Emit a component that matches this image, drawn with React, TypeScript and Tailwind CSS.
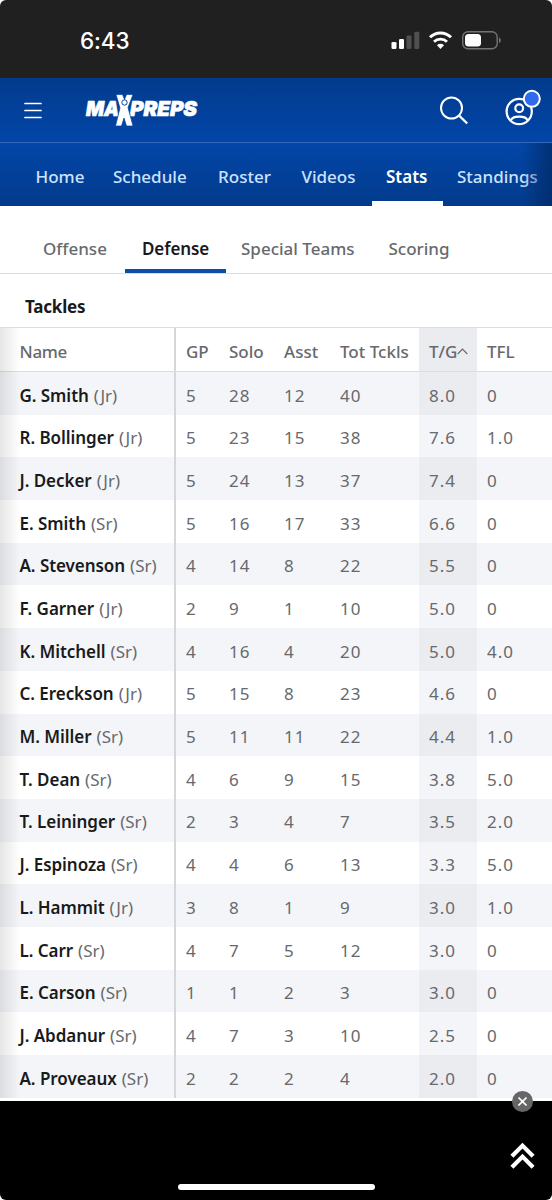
import clsx from 'clsx'

type PlayerRow = {
  name: string
  year: 'Jr' | 'Sr'
  stats: string[]
}

const players: PlayerRow[] = [
  { name: 'G. Smith', year: 'Jr', stats: ['5', '28', '12', '40', '8.0', '0'] },
  { name: 'R. Bollinger', year: 'Jr', stats: ['5', '23', '15', '38', '7.6', '1.0'] },
  { name: 'J. Decker', year: 'Jr', stats: ['5', '24', '13', '37', '7.4', '0'] },
  { name: 'E. Smith', year: 'Sr', stats: ['5', '16', '17', '33', '6.6', '0'] },
  { name: 'A. Stevenson', year: 'Sr', stats: ['4', '14', '8', '22', '5.5', '0'] },
  { name: 'F. Garner', year: 'Jr', stats: ['2', '9', '1', '10', '5.0', '0'] },
  { name: 'K. Mitchell', year: 'Sr', stats: ['4', '16', '4', '20', '5.0', '4.0'] },
  { name: 'C. Ereckson', year: 'Jr', stats: ['5', '15', '8', '23', '4.6', '0'] },
  { name: 'M. Miller', year: 'Sr', stats: ['5', '11', '11', '22', '4.4', '1.0'] },
  { name: 'T. Dean', year: 'Sr', stats: ['4', '6', '9', '15', '3.8', '5.0'] },
  { name: 'T. Leininger', year: 'Sr', stats: ['2', '3', '4', '7', '3.5', '2.0'] },
  { name: 'J. Espinoza', year: 'Sr', stats: ['4', '4', '6', '13', '3.3', '5.0'] },
  { name: 'L. Hammit', year: 'Jr', stats: ['3', '8', '1', '9', '3.0', '1.0'] },
  { name: 'L. Carr', year: 'Sr', stats: ['4', '7', '5', '12', '3.0', '0'] },
  { name: 'E. Carson', year: 'Sr', stats: ['1', '1', '2', '3', '3.0', '0'] },
  { name: 'J. Abdanur', year: 'Sr', stats: ['4', '7', '3', '10', '2.5', '0'] },
  { name: 'A. Proveaux', year: 'Sr', stats: ['2', '2', '2', '4', '2.0', '0'] },
]

const columns = ['GP', 'Solo', 'Asst', 'Tot Tckls', 'T/G', 'TFL']
const SORTED = 4

const navItems = [
  { label: 'Home', width: 'w-[48.500px]' },
  { label: 'Schedule', width: 'w-[76px]' },
  { label: 'Roster', width: 'w-[54.500px]' },
  { label: 'Videos', width: 'w-[55.500px]' },
  { label: 'Stats', width: 'w-[42px]' },
  { label: 'Standings', width: 'w-[82px]' },
]

const tabs = [
  { label: 'Offense', width: 'w-[65px]' },
  { label: 'Defense', width: 'w-[67px]' },
  { label: 'Special Teams', width: 'w-[113px]' },
  { label: 'Scoring', width: 'w-[61px]' },
]

const rowGrid = 'grid grid-cols-[176px_43px_55px_56px_89px_58px_75px]'

function StatusBar() {
  return (
    <div className="h-[78px] shrink-0 bg-[#202020] flex items-center justify-between pt-[4px] pl-[80px] pr-[50px]">
      <span className="font-['Inter'] font-medium text-[22.5px] leading-none text-white tracking-[-0.1px]">6:43</span>
      <svg width="112" height="22" viewBox="390 30 112 22" fill="none">
        <rect x="391.5" y="42" width="5" height="7" rx="1.3" fill="#fff" />
        <rect x="399" y="39" width="5" height="10" rx="1.3" fill="#fff" />
        <rect x="406.5" y="35.5" width="5" height="13.5" rx="1.3" fill="#505050" />
        <rect x="414.3" y="31.8" width="5" height="17.2" rx="1.3" fill="#505050" />
        <path d="M430 37.2a15 15 0 0 1 21 0" stroke="#fff" strokeWidth="3" />
        <path d="M434 41.7a9.3 9.3 0 0 1 13 0" stroke="#fff" strokeWidth="2.8" />
        <path d="M437 45.2a5 5 0 0 1 7 0L440.500 49Z" fill="#fff" />
        <rect x="462.700" y="31.800" width="34.500" height="17" rx="5.300" stroke="#747474" strokeWidth="1.400" />
        <rect x="465" y="34" width="16" height="12.600" rx="3.500" fill="#fff" />
        <path d="M499 37.500c2.400.8 2.400 4.700 0 5.500Z" fill="#747474" />
      </svg>
    </div>
  )
}

function Logo() {
  return (
    <svg width="116" height="36" viewBox="84 92 116 36" fill="none" aria-label="MaxPreps">
      <g fill="#fff" stroke="#fff" strokeWidth="0.7" fontFamily="Inter" fontWeight="900" fontStyle="italic" fontSize="20.500">
        <text x="86" y="115.500" textLength="33" lengthAdjust="spacingAndGlyphs">MA</text>
        <text x="130" y="115.500" textLength="67" lengthAdjust="spacingAndGlyphs">PREPS</text>
      </g>
      {/* jumping figure between the two words */}
      <path
        d="M116 94.500h6.500l2 5 2-5h6.500l-5 13 5 18.500h-6.500l-2.500-8-2.500 8h-6l4.500-18Z"
        fill="#fff"
        stroke="#0343a0"
        strokeWidth="0.700"
      />
      <circle cx="124.500" cy="102.500" r="2.700" fill="#fff" stroke="#0343a0" strokeWidth="1" />
    </svg>
  )
}

function Header() {
  return (
    <header className="h-[128px] shrink-0 relative flex flex-col bg-linear-to-b from-[#023b8d] from-0% via-[#0246a8] via-50% to-[#023b8c] text-white">
      <div className="h-[64px] flex items-center pl-[24px] pr-[10px]">
        <svg width="18" height="17" viewBox="0 0 18 17" stroke="#fff" strokeWidth="1.700" strokeLinecap="round">
          <path d="M1 1.500h16M1 8.500h16M1 15.500h16" />
        </svg>
        <div className="ml-[42px]">
          <Logo />
        </div>
        <svg className="ml-auto" width="30" height="30" viewBox="439 95 30 30" fill="none" stroke="#fff" strokeWidth="2">
          <circle cx="451.500" cy="108" r="10.500" />
          <path d="M459 115.500l8.200 8" strokeWidth="2.400" />
        </svg>
        <svg className="ml-[35px] mb-[3px]" width="38" height="40" viewBox="504 88 38 40" fill="none" stroke="#fff" strokeWidth="2.200">
          <circle cx="519.200" cy="110.500" r="12.600" />
          <circle cx="519.200" cy="107.200" r="3.900" />
          <path d="M510.700 119.500c1.500-3.400 4-3.800 8.500-3.800s7 .4 8.500 3.800" />
          <circle cx="531.800" cy="97.800" r="8" fill="#2f6bea" strokeWidth="2" />
        </svg>
      </div>
      <nav className="h-[64px] flex items-stretch pl-[21px] overflow-hidden border-t border-[#3468b7]">
        {navItems.map((item) => (
          <a
            key={item.label}
            className={clsx(
              'shrink-0 px-[14.500px] pt-[9px] flex items-center border-b-[5px] text-[17px] font-medium whitespace-nowrap',
              item.label === 'Stats' ? 'border-white text-white font-semibold' : 'border-transparent text-[#cbe3ff]'
            )}
          >
            <span className={item.width}>{item.label}</span>
          </a>
        ))}
      </nav>
      <div className="absolute right-0 bottom-0 w-[30px] h-[63px] bg-linear-to-r from-transparent to-[#022b68]/80" />
    </header>
  )
}

function CategoryTabs() {
  return (
    <div className="h-[68px] shrink-0 border-b border-[#dcdddf] flex pl-[26px]">
      {tabs.map((tab) => (
        <a
          key={tab.label}
          className={clsx(
            'shrink-0 pt-[23px] h-[67px] border-b-4 flex items-center text-[17px] whitespace-nowrap',
            tab.label === 'Special Teams' ? 'pl-[15px] pr-[17.500px]' : 'px-[17px]',
            tab.label === 'Defense'
              ? 'border-[#0c4cac] text-[#181a1c] font-semibold tracking-[-0.1px]'
              : 'border-transparent text-[#67696d] font-medium'
          )}
        >
          <span className={tab.width}>{tab.label}</span>
        </a>
      ))}
    </div>
  )
}

function StatsTable() {
  return (
    <div className="relative">
      <div className={`${rowGrid} h-[45px] border-y border-[#dcdddf] text-[17px] font-medium text-[#67696d]`}>
        <div className="flex items-center pl-[19.500px] pt-[4px] border-r-2 border-[#d6d7da] tracking-[-0.3px]">Name</div>
        {columns.map((column, i) => (
          <div key={column} className={clsx('flex items-center pl-[10px] pt-[4px] whitespace-nowrap', i === SORTED && 'bg-[#ebecf0]')}>
            {column}
            {i === SORTED && (
              <svg width="11" height="7" viewBox="0 0 11 7" fill="none" stroke="#67696d" strokeWidth="1.200" className="shrink-0">
                <path d="M.7 6l4.800-4.800L10.300 6" />
              </svg>
            )}
          </div>
        ))}
      </div>
      {players.map((player, row) => (
        <div key={player.name} className={clsx(rowGrid, 'h-[42.700px] text-[17px] text-[#67696d]', row % 2 === 0 && 'bg-[#f4f5f8]')}>
          <div className="flex items-center gap-[5px] pl-[19.500px] pt-[4px] border-r-2 border-[#d6d7da] whitespace-nowrap">
            <span className="font-semibold text-[#181a1c] tracking-[-0.05px]">{player.name}</span>
            <span>({player.year})</span>
          </div>
          {player.stats.map((value, i) => (
            <div
              key={i}
              className={clsx(
                'flex items-center pl-[10px] pt-[4px] tracking-[1px]',
                i === SORTED && (row % 2 === 0 ? 'bg-[#ebecf0]' : 'bg-[#f4f5f8]')
              )}
            >
              {value}
            </div>
          ))}
        </div>
      ))}
      {/* scroll shadow on the left edge */}
      <div className="absolute left-0 top-[1px] bottom-0 w-[20px] bg-linear-to-r from-black/10 to-transparent" />
    </div>
  )
}

function BottomBar() {
  return (
    <div className="absolute inset-x-0 bottom-0 h-[99px] bg-black">
      <div className="absolute left-[512px] -top-[10px] size-[21px] rounded-full bg-[#666] flex items-center justify-center">
        <svg width="9" height="9" viewBox="0 0 9 9" stroke="#fff" strokeWidth="1.600">
          <path d="M.5.5l8 8M8.500.5l-8 8" />
        </svg>
      </div>
      <svg className="absolute left-[510px] top-[40px]" width="25" height="29" viewBox="0 0 25 29" fill="none" stroke="#fff" strokeWidth="4.200">
        <path d="M1.900 15.200L12.500 4.600l10.600 10.600M1.900 26.200l10.600-10.600 10.600 10.600" />
      </svg>
      <div className="absolute left-[178px] bottom-[10px] w-[197px] h-[6px] rounded-full bg-white" />
    </div>
  )
}

export default function App() {
  return (
    <div className="w-[552px] h-[1200px] bg-white">
      <div className="relative w-full h-full overflow-hidden rounded-[6px] bg-white flex flex-col font-['Noto_Sans',sans-serif]">
        <StatusBar />
        <Header />
        <CategoryTabs />
        <h2 className="h-[53px] shrink-0 pl-[25px] pt-[13px] text-[17px] leading-[40px] font-bold text-[#181a1c] tracking-[-0.2px]">Tackles</h2>
        <StatsTable />
        <BottomBar />
      </div>
    </div>
  )
}
